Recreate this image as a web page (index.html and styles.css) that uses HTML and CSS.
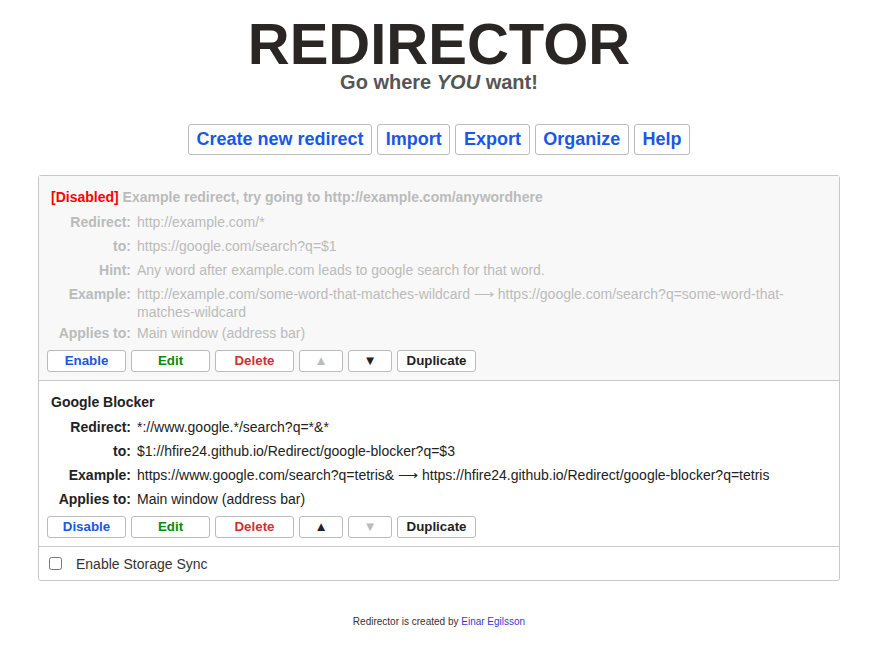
FILE: index.html
```html
<!DOCTYPE html>
<html>
<head>
<meta charset="utf-8">
<title>Redirector</title>
<link rel="stylesheet" href="styles.css">
</head>
<body>
<div class="page">
  <header class="head">
    <h1 class="logo">REDIRECTOR</h1>
    <h2 class="tagline">Go where <em>YOU</em> want!</h2>
  </header>

  <nav class="menu">
    <button class="menu-btn">Create new redirect</button>
    <button class="menu-btn">Import</button>
    <button class="menu-btn">Export</button>
    <button class="menu-btn">Organize</button>
    <button class="menu-btn">Help</button>
  </nav>

  <div class="list">
    <section class="redirect disabled">
      <div class="title"><span class="flag">[Disabled]</span> Example redirect, try going to http://example.com/anywordhere</div>
      <div class="rows">
        <div class="row"><span class="label">Redirect:</span><span class="value">http://example.com/*</span></div>
        <div class="row"><span class="label">to:</span><span class="value">https://google.com/search?q=$1</span></div>
        <div class="row"><span class="label">Hint:</span><span class="value">Any word after example.com leads to google search for that word.</span></div>
        <div class="row row-wrap"><span class="label">Example:</span><span class="value">http://example.com/some-word-that-matches-wildcard ⟶ https://google.com/search?q=some-word-that-matches-wildcard</span></div>
        <div class="row"><span class="label">Applies to:</span><span class="value">Main window (address bar)</span></div>
      </div>
      <div class="actions">
        <button class="act act-toggle">Enable</button>
        <button class="act act-edit">Edit</button>
        <button class="act act-delete">Delete</button>
        <button class="act act-arrow off">▲</button>
        <button class="act act-arrow">▼</button>
        <button class="act act-dup">Duplicate</button>
      </div>
    </section>

    <section class="redirect">
      <div class="title">Google Blocker</div>
      <div class="rows">
        <div class="row"><span class="label">Redirect:</span><span class="value">*://www.google.*/search?q=*&amp;*</span></div>
        <div class="row"><span class="label">to:</span><span class="value">$1://hfire24.github.io/Redirect/google-blocker?q=$3</span></div>
        <div class="row"><span class="label">Example:</span><span class="value">https://www.google.com/search?q=tetris&amp; ⟶ https://hfire24.github.io/Redirect/google-blocker?q=tetris</span></div>
        <div class="row"><span class="label">Applies to:</span><span class="value">Main window (address bar)</span></div>
      </div>
      <div class="actions">
        <button class="act act-toggle">Disable</button>
        <button class="act act-edit">Edit</button>
        <button class="act act-delete">Delete</button>
        <button class="act act-arrow">▲</button>
        <button class="act act-arrow off">▼</button>
        <button class="act act-dup">Duplicate</button>
      </div>
    </section>

    <label class="sync"><input type="checkbox" class="sync-box"><span>Enable Storage Sync</span></label>
  </div>

  <footer class="footer">Redirector is created by <a href="#">Einar Egilsson</a></footer>
</div>
</body>
</html>
```

FILE: styles.css
```css
html, body {
  margin: 0;
  padding: 0;
  background: #fff;
}

body {
  font-family: "Liberation Sans", Arial, sans-serif;
  color: #222;
}

.page {
  width: 802px;
  margin-left: 38px;
  padding-top: 20px;
}

.head {
  display: flex;
  flex-direction: column;
  align-items: center;
  gap: 5px;
}

.logo {
  margin: 0;
  font-size: 58px;
  line-height: 47px;
  font-weight: bold;
  color: #2a2626;
}

.tagline {
  margin: 0;
  font-size: 20px;
  line-height: 20px;
  font-weight: bold;
  color: #555;
}

.tagline em {
  font-style: italic;
}

.menu {
  display: flex;
  justify-content: center;
  gap: 5px;
  margin-top: 32px;
}

.menu-btn {
  font-family: "Liberation Sans", Arial, sans-serif;
  font-size: 18px;
  font-weight: bold;
  line-height: 21px;
  color: #1a56e8;
  background: #fff;
  border: 1px solid #bbb;
  border-radius: 3px;
  padding: 4px 7.6px;
  margin: 0;
}

.list {
  margin-top: 20px;
  border: 1px solid #c8c8c8;
  border-radius: 3px;
}

.redirect {
  padding: 12px 8px 8px;
  border-bottom: 1px solid #c8c8c8;
}

.redirect.disabled {
  background: #f8f8f8;
}

.title {
  margin-left: 4px;
  font-size: 14px;
  line-height: 18px;
  font-weight: bold;
  color: #222;
}

.disabled .title {
  color: #bbb;
}

.flag {
  color: #f00;
}

.rows {
  margin: 7px 0 0 4px;
  display: flex;
  flex-direction: column;
  gap: 6px;
}

.row {
  display: flex;
  gap: 6px;
  font-size: 14px;
  line-height: 18px;
}

.row-wrap {
  margin-bottom: -3px;
}

.label {
  flex: 0 0 80px;
  text-align: right;
  font-weight: bold;
  color: #222;
}

.value {
  color: #222;
}

.disabled .label,
.disabled .value {
  color: #bbb;
}

.actions {
  display: flex;
  gap: 5px;
  margin-top: 8px;
}

.act {
  width: 79px;
  font-family: "Liberation Sans", Arial, sans-serif;
  font-size: 13.33px;
  font-weight: bold;
  line-height: 14px;
  padding: 3px 0;
  margin: 0;
  background: #fff;
  border: 1px solid #bbb;
  border-radius: 3px;
  color: #222;
}

.act-toggle { color: #1a56e8; }
.act-edit { color: #0a8a0a; }
.act-delete { color: #d03030; }
.act-arrow { width: 44px; color: #222; }
.act-arrow.off { color: #bbb; }

.sync {
  display: flex;
  align-items: center;
  gap: 14px;
  height: 33px;
  padding-left: 10px;
  font-size: 14px;
  color: #333;
}

.sync-box {
  width: 13px;
  height: 13px;
  margin: 0;
}

.footer {
  margin-top: 35px;
  text-align: center;
  font-size: 10px;
  color: #333;
}

.footer a {
  color: #3a3ad8;
  text-decoration: none;
}
```
